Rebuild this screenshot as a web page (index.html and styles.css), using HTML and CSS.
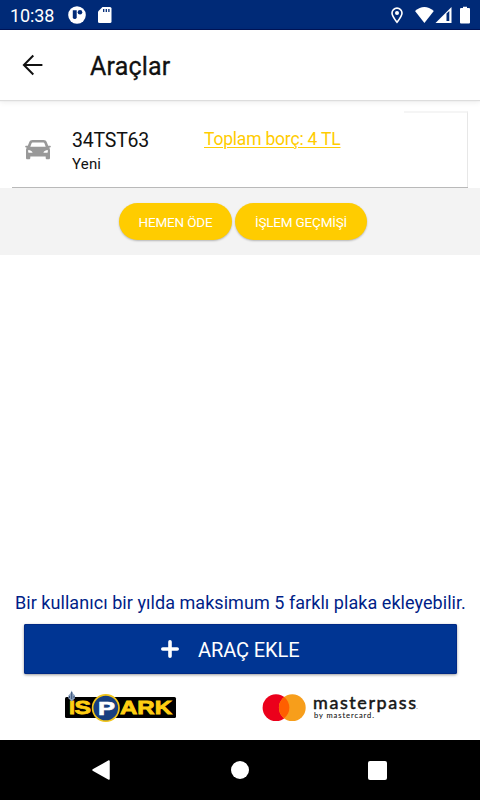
FILE: index.html
```html
<!DOCTYPE html>
<html lang="tr">
<head>
<meta charset="utf-8">
<title>Araçlar</title>
<link rel="stylesheet" href="styles.css">
</head>
<body>
<div class="screen">
  <div class="status">
    <span class="clock">10:38</span>
    <svg class="status-left" width="50" height="29" viewBox="0 0 50 29">
      <circle cx="9" cy="15" r="8.8" fill="#fff"/>
      <path d="M4.800 10.300h3.900v7.200a2 2 0 0 1-3.900 0z" fill="#002a77"/>
      <circle cx="12" cy="12.300" r="2.300" fill="#002a77"/>
      <path d="M34.500 7H42a1.500 1.500 0 0 1 1.500 1.500v13A1.500 1.500 0 0 1 42 23H31.500a1.500 1.500 0 0 1-1.500-1.500V11.500z" fill="#fff"/>
      <path d="M35.700 9v3M38.300 9v3M40.900 9v3" stroke="#002a77" stroke-width="1.300"/>
    </svg>
    <svg class="status-right" width="90" height="29" viewBox="390 0 90 29">
      <path d="M397 22.300c-2.500-3.200-5-6.200-5-9.200a5 5 0 0 1 10 0c0 3-2.500 6-5 9.200z" fill="none" stroke="#fff" stroke-width="1.600"/>
      <circle cx="397" cy="13" r="2" fill="#fff"/>
      <path d="M415 11q9.300-8 18.800 0L424.400 23z" fill="#fff"/>
      <path d="M451.500 7v16h-16z" fill="#fff"/>
      <path d="M446.500 13.500l2.800-2.600v10.100h-2.800z" fill="#002a77"/>
      <path d="M463 6.700h4V8h2a1 1 0 0 1 1 1v13.500a1 1 0 0 1-1 1h-8a1 1 0 0 1-1-1V9a1 1 0 0 1 1-1h2z" fill="#fff"/>
    </svg>
  </div>
  <header class="header">
    <svg class="back" width="22" height="22" viewBox="0 0 22 22"><path d="M11.300 1.500L1.900 11l9.400 9.500M2 11h18.400" fill="none" stroke="#111" stroke-width="2"/></svg>
    <h1 class="title">Araçlar</h1>
  </header>
  <main class="content">
    <section class="vehicle">
      <svg class="car" width="26" height="20" viewBox="0 0 26 20">
        <path fill="#999" fill-rule="evenodd" d="M7.500 0h11c1.700 0 2.700.8 3.300 2.300L23.200 5.800h1.900c1 0 1 1.500 0 1.800l-1 .2c.7.700.9 1.400.9 2.400v7.700c0 .9-.5 1.400-1.400 1.400h-1.500c-.9 0-1.400-.5-1.400-1.400v-1.500H5.300v1.500c0 .9-.5 1.400-1.400 1.400H2.400c-.9 0-1.400-.5-1.400-1.400v-7.700c0-1 .2-1.700.9-2.400l-1-.2c-1-.3-1-1.800 0-1.800h1.900L4.200 2.300C4.800.8 5.800 0 7.500 0zM8 2.600c-.8 0-1.200.3-1.500 1L5.300 6.700h15.400l-1.200-3.100c-.3-.7-.7-1-1.500-1zM3.200 10v2.400c1.500.5 3.300.5 4.500.1C6.900 10.900 5.200 10 3.200 10zm19.600 0c-2 0-3.700.9-4.500 2.500 1.200.4 3 .4 4.500-.1z"/>
      </svg>
      <div class="names">
        <div class="plate">34TST63</div>
        <div class="kind">Yeni</div>
      </div>
      <a class="debt">Toplam borç: 4 TL</a>
      <span class="card-edge"></span>
    </section>
    <div class="actions">
      <button class="pill pay">HEMEN ÖDE</button>
      <button class="pill history">İŞLEM GEÇMİŞİ</button>
    </div>
  </main>
  <footer class="footer">
    <p class="note">Bir kullanıcı bir yılda maksimum 5 farklı plaka ekleyebilir.</p>
    <button class="add">
      <svg width="18" height="18" viewBox="0 0 18 18"><path d="M9 1.800v14.400M1.800 9h14.400" stroke="#fff" stroke-width="3.600" stroke-linecap="round"/></svg>
      <span class="add-label">ARAÇ EKLE</span>
    </button>
    <div class="logos">
      <svg width="112" height="34" viewBox="65 690 112 34">
        <rect x="65" y="697" width="111" height="21" rx="1.500" fill="#000"/>
        <g class="ispark">
          <text x="69" y="714.300" textLength="6" lengthAdjust="spacingAndGlyphs">I</text>
          <text x="74.500" y="714.300" textLength="16.500" lengthAdjust="spacingAndGlyphs">S</text>
          <text x="120" y="714.300" textLength="52" lengthAdjust="spacingAndGlyphs">ARK</text>
        </g>
        <path d="M71.700 690.500l1.300 3 2 2v2.700l-3.300 3.300-3.400-3.300v-2.700l2-2z" fill="#8ba0bd"/>
        <path d="M71.700 692v7M69.500 696v2M74 696v2" stroke="#243c67" stroke-width=".8"/>
        <circle cx="105.800" cy="708" r="13.200" fill="#173f80" stroke="#f3c619" stroke-width="1.700"/>
        <text class="ispark-p" x="98" y="714.700" textLength="17" lengthAdjust="spacingAndGlyphs">P</text>
      </svg>
      <svg width="156" height="34" viewBox="262 690 156 34">
        <circle cx="276" cy="707.700" r="13.400" fill="#eb001b"/>
        <circle cx="292.300" cy="707.700" r="13.400" fill="#f79e1b"/>
        <path d="M284.150 697.100a13.400 13.400 0 0 1 0 21.200a13.400 13.400 0 0 1 0-21.200z" fill="#ff5f00"/>
        <text class="mp" x="313" y="709" textLength="103" lengthAdjust="spacing">masterpass</text>
        <text class="mp-by" x="314" y="717.500" textLength="60" lengthAdjust="spacing">by mastercard.</text>
        <circle cx="417" cy="708.500" r=".5" fill="#888"/>
      </svg>
    </div>
  </footer>
  <nav class="nav">
    <svg width="20" height="22" viewBox="0 0 20 22"><path d="M18 2v18L2 11z" fill="#fff" stroke="#fff" stroke-width="1.500" stroke-linejoin="round"/></svg>
    <span class="home"></span>
    <span class="recent"></span>
  </nav>
</div>
</body>
</html>
```
FILE: styles.css
```css
* { box-sizing: border-box; }
body { margin: 0; background: #fff; font-family: Roboto, sans-serif; color: #111; }
button { border: 0; padding: 0; font-family: inherit; font-weight: 400; color: #fff; }
svg { display: block; flex: none; }
.screen { width: 480px; height: 800px; display: flex; flex-direction: column; }
.status { height: 30px; display: flex; background: #002a77; border-bottom: 1px solid #001457; color: #fff; }
.clock { width: 58px; padding-left: 10px; margin-right: 10px; font-size: 18px; line-height: 32px; letter-spacing: -.1px; }
.status-right { margin-left: auto; }
.header { height: 70px; display: flex; align-items: center; padding-left: 22px; box-shadow: 0 1px 1px #ddd, 0 2px 6px rgba(0,0,0,.08); position: relative; z-index: 1; }
.title { margin: 4px 0 0 46px; font-size: 25px; line-height: 32px; font-weight: 400; letter-spacing: .2px; -webkit-text-stroke: .3px #111; }
.content { flex: 1; background: #fff; }
.vehicle { position: relative; height: 88px; margin: 0 12px; display: flex; border-bottom: 1px solid #b9b9b9; }
.card-edge { position: absolute; right: 0; top: 11px; width: 64px; height: 76px; border-top: 2px solid #f5f5f5; border-right: 1px solid #e7e7e7; }
.car { margin: 40px 0 0 13px; }
.names { margin: 28px 0 0 21px; width: 132px; }
.plate { font-size: 19.500px; line-height: 25px; letter-spacing: -.2px; }
.kind { font-size: 15px; line-height: 23px; letter-spacing: .2px; }
.debt { margin-top: 27px; height: 24px; font-size: 17.500px; line-height: 25px; letter-spacing: -.2px; color: #fc0; text-decoration: underline; text-decoration-thickness: 1px; text-underline-offset: 2px; white-space: nowrap; }
.actions { height: 67px; padding-top: 15px; display: flex; justify-content: center; gap: 3px; background: #f3f3f3; padding-left: 6px; }
.pill { height: 37px; border-radius: 19px; background: #fc0; font-size: 13.500px; letter-spacing: -.2px; padding-top: 1px; box-shadow: 0 1px 2px rgba(0,0,0,.25); }
.pay { width: 113px; }
.history { width: 132px; }
.footer { height: 150px; display: flex; flex-direction: column; }
.note { margin: 0 0 0 15px; font-size: 18px; line-height: 25px; height: 24px; letter-spacing: .05px; color: #001e87; white-space: nowrap; }
.add { height: 50px; width: 433px; margin: 10px 0 0 24px; display: flex; align-items: center; background: #003593; border-radius: 2px; box-shadow: inset 0 0 0 1px #002985, 0 1px 3px rgba(0,0,0,.4); padding-left: 137px; font-size: 20px; letter-spacing: -.1px; }
.add-label { margin-left: 19px; padding-top: 1px; }
.logos { display: flex; gap: 85px; margin: 16px 0 0 65px; }
.ispark { font: bold 18.500px "Liberation Sans", sans-serif; fill: #ffce12; stroke: #ffce12; stroke-width: .8px; }
.ispark-p { font: bold 18px "Liberation Sans", sans-serif; fill: #fff; stroke: #fff; stroke-width: .6px; }
.mp { font: 400 18px Lato, sans-serif; fill: #161616; stroke: #161616; stroke-width: .5px; }
.mp-by { font: 7.500px Lato, sans-serif; fill: #161616; stroke: #161616; stroke-width: .1px; }
.nav { height: 60px; background: #000; display: flex; align-items: center; padding-left: 91px; }
.home { width: 18px; height: 18px; border-radius: 50%; background: #fff; margin-left: 120px; }
.recent { width: 19px; height: 19px; border-radius: 2px; background: #fff; margin-left: 119px; }
```
